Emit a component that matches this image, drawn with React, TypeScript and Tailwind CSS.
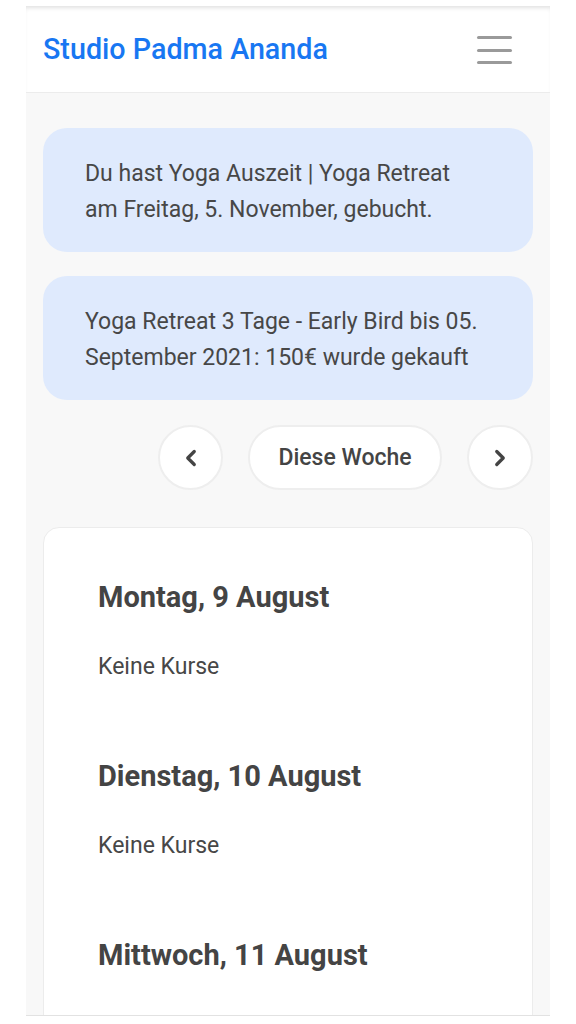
import { ChevronLeft, ChevronRight } from 'lucide-react';

const notices = [
    ['Du hast Yoga Auszeit | Yoga Retreat', 'am Freitag, 5. November, gebucht.'],
    ['Yoga Retreat 3 Tage - Early Bird bis 05.', 'September 2021: 150€ wurde gekauft'],
];

const days = [
    { title: 'Montag, 9 August', showEmpty: true },
    { title: 'Dienstag, 10 August', showEmpty: true },
    { title: 'Mittwoch, 11 August', showEmpty: false },
];

export default function App() {
    return (
        <div className="h-[1024px] overflow-hidden bg-white pt-[6px] px-[26px] font-['Roboto',sans-serif] text-[#444]">
            <div className="h-[1010px] overflow-hidden bg-[#f8f8f8] border-b border-[#e2e2e2]">
                {/* Header */}
                <header className="h-[87px] bg-white border-b border-[#ececec] shadow-[inset_0_4px_4px_-2px_rgba(0,0,0,0.12)] flex items-center justify-between pl-[17px] pr-[38px]">
                    <h1 className="text-[28.7px] font-medium text-[#1877f2] pt-[2px]">Studio Padma Ananda</h1>
                    <button className="flex flex-col gap-[9.5px] pt-[2px]">
                        <span className="block w-[35px] h-[3px] rounded bg-[#9a9a9a]" />
                        <span className="block w-[35px] h-[3px] rounded bg-[#9a9a9a]" />
                        <span className="block w-[35px] h-[3px] rounded bg-[#9a9a9a]" />
                    </button>
                </header>

                <main className="px-[17px] pt-[35px]">
                    {/* Benachrichtigungen */}
                    <div className="flex flex-col gap-[24px]">
                        {notices.map((lines) => (
                            <div key={lines[0]} className="bg-[#dfeafd] rounded-[24px] pl-[42px] pr-[20px] pt-[28px] pb-[24px] text-[23px] leading-[36px] text-[#474747] whitespace-nowrap">
                                {lines[0]}
                                <br />
                                {lines[1]}
                            </div>
                        ))}
                    </div>

                    {/* Wochen-Navigation */}
                    <div className="flex justify-end gap-[25px] mt-[25px]">
                        <button className="w-[65px] h-[65px] rounded-full bg-white border-2 border-[#eeeeee] flex items-center justify-center">
                            <ChevronLeft size={26} strokeWidth={3} className="text-[#444]" />
                        </button>
                        <button className="w-[194px] h-[65px] rounded-full bg-white border-2 border-[#eeeeee] text-[23px] font-medium text-[#444] pt-[1px]">
                            Diese Woche
                        </button>
                        <button className="w-[66px] h-[65px] rounded-full bg-white border-2 border-[#eeeeee] flex items-center justify-center">
                            <ChevronRight size={26} strokeWidth={3} className="text-[#444]" />
                        </button>
                    </div>

                    {/* Kursplan */}
                    <div className="mt-[37px] bg-white rounded-[16px] border border-[#ececec] pl-[54px] pr-[40px] pt-[52px] pb-[40px]">
                        {days.map((d) => (
                            <section key={d.title} className="mb-[77px]">
                                <h2 className="text-[29px] leading-[34px] font-bold text-[#444]">{d.title}</h2>
                                {d.showEmpty && (
                                    <p className="mt-[38px] text-[23px] leading-[30px] text-[#474747]">Keine Kurse</p>
                                )}
                            </section>
                        ))}
                    </div>
                </main>
            </div>
        </div>
    );
}
